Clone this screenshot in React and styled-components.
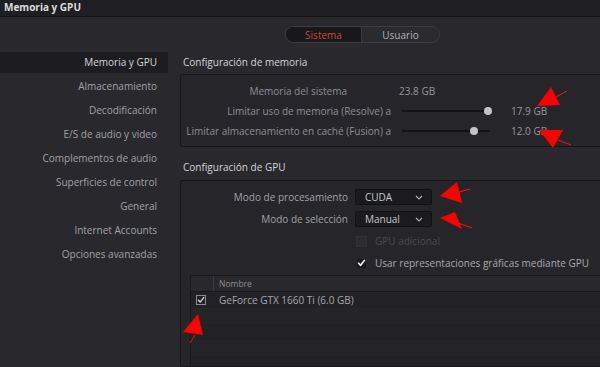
import React from "react";
import styled, { createGlobalStyle } from "styled-components";

const GlobalStyle = createGlobalStyle`
  html, body {
    margin: 0;
    padding: 0;
    background: #28282d;
  }
  body {
    font-family: "Open Sans", "Noto Sans", sans-serif;
    font-size: 10px;
    color: #a4a4aa;
  }
`;

const sidebarItems = [
  "Memoria y GPU",
  "Almacenamiento",
  "Decodificación",
  "E/S de audio y video",
  "Complementos de audio",
  "Superficies de control",
  "General",
  "Internet Accounts",
  "Opciones avanzadas",
];

const App = () => {
  return (
    <Window>
      <GlobalStyle />
      <TitleBar>Memoria y GPU</TitleBar>
      <TabRow>
        <Segmented>
          <Segment active>Sistema</Segment>
          <Segment>Usuario</Segment>
        </Segmented>
      </TabRow>
      <Body>
        <Sidebar>
          {sidebarItems.map((item, i) => (
            <SideItem key={item} active={i === 0}>
              {item}
            </SideItem>
          ))}
        </Sidebar>
        <Content>
          <SectionTitle>Configuración de memoria</SectionTitle>
          <Panel padTop={6} height={73}>
            <Row labelWidth={166} gap={52}>
              <Label>Memoria del sistema</Label>
              <Value>23.8 GB</Value>
            </Row>
            <Row labelWidth={210} gap={11}>
              <Label>Limitar uso de memoria (Resolve) a</Label>
              <Slider>
                <Track />
                <Knob style={{ left: "98%" }} />
              </Slider>
              <Value>17.9 GB</Value>
            </Row>
            <Row labelWidth={210} gap={11}>
              <Label>Limitar almacenamiento en caché (Fusion) a</Label>
              <Slider>
                <Track />
                <Knob style={{ left: "82%" }} />
              </Slider>
              <Value>12.0 GB</Value>
            </Row>
          </Panel>

          <SectionTitle gpu>Configuración de GPU</SectionTitle>
          <Panel padTop={5}>
            <FormRow>
              <FormLabel>Modo de procesamiento</FormLabel>
              <Select>
                CUDA
                <Chevron />
              </Select>
            </FormRow>
            <FormRow>
              <FormLabel>Modo de selección</FormLabel>
              <Select>
                Manual
                <Chevron />
              </Select>
            </FormRow>
            <CheckRow disabled>
              <Check disabled />
              GPU adicional
            </CheckRow>
            <CheckRow>
              <Check checked>
                <CheckMark size={10} color="#f2f2f2" />
              </Check>
              Usar representaciones gráficas mediante GPU
            </CheckRow>
            <Table>
              <HeadRow>
                <HeadCell narrow />
                <HeadCell>Nombre</HeadCell>
              </HeadRow>
              <TableRow>
                <Cell narrow>
                  <SmallCheck>
                    <CheckMark size={8} color="#cfcfd2" />
                  </SmallCheck>
                </Cell>
                <Cell>GeForce GTX 1660 Ti (6.0 GB)</Cell>
              </TableRow>
              <TableRow odd />
              <TableRow />
              <TableRow odd />
            </Table>
          </Panel>
        </Content>
      </Body>
      <Annotations viewBox="0 0 600 367" width="600" height="367">
        <polygon points="537,106 551,87 560,105" />
        <line x1="556" y1="97" x2="567" y2="91" />
        <polygon points="539,130 563,130 553,148" />
        <line x1="558" y1="140" x2="571" y2="145" />
        <polygon points="440,196 457,182 462,203" />
        <line x1="459" y1="192" x2="470" y2="189" />
        <polygon points="440,218 455,212 462,229" />
        <line x1="458" y1="223" x2="472" y2="228" />
        <polygon points="183,332 198,314 203,335" />
        <line x1="195" y1="335" x2="190" y2="343" />
      </Annotations>
    </Window>
  );
};

const CheckMark = ({ size, color }) => (
  <svg width={size} height={size} viewBox="0 0 10 10">
    <path
      d="M1.8 5.2 L4 7.6 L8.4 2"
      fill="none"
      stroke={color}
      strokeWidth="1.8"
      strokeLinecap="round"
      strokeLinejoin="round"
    />
  </svg>
);

const Chevron = () => (
  <ChevronIcon width="8" height="5" viewBox="0 0 8 5">
    <path d="M1 1 L4 4 L7 1" fill="none" stroke="#b0b0b4" strokeWidth="1.1" />
  </ChevronIcon>
);

export default App;

const Window = styled.div`
  position: relative;
  width: 600px;
  height: 367px;
  overflow: hidden;
  background: #28282d;
`;

const TitleBar = styled.div`
  height: 17px;
  line-height: 15px;
  padding-left: 4px;
  background: #1f1f23;
  border-bottom: 1px solid #131316;
  color: #dcdcdf;
  font-weight: 700;
  font-size: 10px;
  box-sizing: border-box;
`;

const TabRow = styled.div`
  height: 35px;
  display: flex;
  align-items: center;
  padding-left: 285px;
  box-sizing: border-box;
`;

const Segmented = styled.div`
  display: flex;
  height: 17px;
  border: 1px solid #3c3c41;
  border-radius: 9px;
  overflow: hidden;
  box-sizing: border-box;
`;

const Segment = styled.div`
  width: ${(p) => (p.active ? "75px" : "77px")};
  display: flex;
  align-items: center;
  justify-content: center;
  font-size: 10px;
  color: ${(p) => (p.active ? "#cf4638" : "#b4b4b8")};
  background: ${(p) => (p.active ? "#18181b" : "#2a2a2f")};
  border-right: ${(p) => (p.active ? "1px solid #3c3c41" : "none")};
`;

const Body = styled.div`
  display: flex;
  height: 315px;
`;

const Sidebar = styled.div`
  width: 168px;
  flex-shrink: 0;
  display: flex;
  flex-direction: column;
`;

const SideItem = styled.div`
  height: 24px;
  line-height: 21px;
  text-align: right;
  padding-right: 11px;
  font-size: 10px;
  color: ${(p) => (p.active ? "#d6d6da" : "#a2a2a8")};
  background: ${(p) => (p.active ? "#1d1d21" : "transparent")};
  ${(p) => p.active && "height: 21px; margin-bottom: 3px;"}
`;

const Content = styled.div`
  flex: 1;
  padding-left: 12px;
  display: flex;
  flex-direction: column;
  min-width: 0;
`;

const SectionTitle = styled.div`
  height: ${(p) => (p.gpu ? "23px" : "22px")};
  line-height: 20px;
  padding-left: 3px;
  margin-top: ${(p) => (p.gpu ? "10px" : "0")};
  color: #d4d4d8;
  font-size: 10px;
`;

const Panel = styled.div`
  width: 440px;
  ${(p) => (p.height ? `height: ${p.height}px;` : "flex: 1;")}
  box-sizing: border-box;
  padding-top: ${(p) => p.padTop}px;
  border: 1px solid #17171a;
  border-radius: 2px;
  background: #26262a;
  display: flex;
  flex-direction: column;
`;

const Row = styled.div`
  height: 20px;
  display: grid;
  grid-template-columns: ${(p) => p.labelWidth}px auto auto;
  column-gap: ${(p) => p.gap}px;
  align-items: center;
  justify-content: start;
`;

const Label = styled.div`
  text-align: right;
  color: #8e8e94;
  white-space: nowrap;
`;

const Value = styled.div`
  color: #96969b;
`;

const Slider = styled.div`
  position: relative;
  width: 88px;
  height: 8px;
  display: flex;
  align-items: center;
  margin-right: 10px;
`;

const Track = styled.div`
  width: 100%;
  height: 2px;
  background: #131315;
`;

const Knob = styled.div`
  position: absolute;
  top: 0;
  width: 8px;
  height: 8px;
  margin-left: -4px;
  border-radius: 50%;
  background: #c4c4c7;
`;

const FormRow = styled.div`
  height: 22px;
  display: flex;
  align-items: center;
  gap: 7px;
`;

const FormLabel = styled.div`
  width: 167px;
  text-align: right;
  color: #a0a0a6;
  font-size: 10px;
`;

const Select = styled.div`
  width: 77px;
  height: 16px;
  box-sizing: border-box;
  padding: 0 8px 0 9px;
  display: flex;
  align-items: center;
  justify-content: space-between;
  background: #1b1b1e;
  border: 1px solid #111113;
  border-radius: 2px;
  color: #c6c6ca;
  font-size: 10px;
`;

const ChevronIcon = styled.svg`
  display: block;
`;

const CheckRow = styled.div`
  height: 22px;
  display: flex;
  align-items: center;
  padding-left: 175px;
  gap: 8px;
  color: ${(p) => (p.disabled ? "#4a4a50" : "#a8a8ae")};
  font-size: 10px;
`;

const Check = styled.div`
  width: 11px;
  height: 11px;
  box-sizing: border-box;
  border: 1px solid ${(p) => (p.disabled ? "#313136" : "#26262a")};
  background: ${(p) => (p.disabled ? "#2b2b30" : "#1a1a1d")};
  display: flex;
  align-items: center;
  justify-content: center;
`;

const Table = styled.div`
  margin: 1px 0 0 9px;
  flex: 1;
  background: #222226;
  border-left: 1px solid #1a1a1d;
  border-top: 1px solid #1a1a1d;
`;

const HeadRow = styled.div`
  height: 15px;
  display: flex;
  background: #29292d;
  border-bottom: 1px solid #18181b;
`;

const HeadCell = styled.div`
  width: ${(p) => (p.narrow ? "22px" : "auto")};
  flex: ${(p) => (p.narrow ? "none" : 1)};
  border-right: ${(p) => (p.narrow ? "1px solid #3a3a3f" : "none")};
  padding-left: ${(p) => (p.narrow ? 0 : 5)}px;
  line-height: 15px;
  font-size: 8.5px;
  color: #8c8c92;
`;

const TableRow = styled.div`
  height: 16px;
  display: flex;
  align-items: center;
  background: ${(p) => (p.odd ? "#252529" : "#222226")};
`;

const Cell = styled.div`
  width: ${(p) => (p.narrow ? "23px" : "auto")};
  flex: ${(p) => (p.narrow ? "none" : 1)};
  padding-left: 5px;
  box-sizing: border-box;
  display: flex;
  align-items: center;
  font-size: 10px;
  color: #a6a6ac;
`;

const SmallCheck = styled.div`
  width: 10px;
  height: 10px;
  box-sizing: border-box;
  border: 1px solid #8a8a90;
  display: flex;
  align-items: center;
  justify-content: center;
`;

const Annotations = styled.svg`
  position: absolute;
  left: 0;
  top: 0;
  pointer-events: none;
  & polygon {
    fill: #ff0000;
  }
  & line {
    stroke: #ff1010;
    stroke-width: 1;
  }
`;
